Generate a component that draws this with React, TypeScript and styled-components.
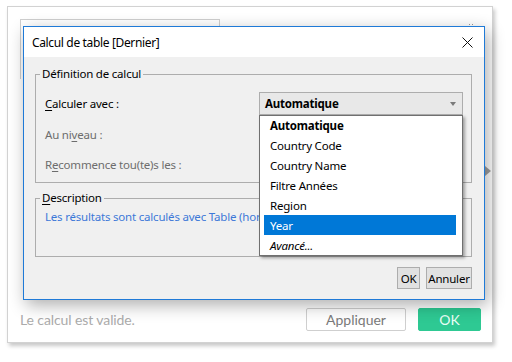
import React from "react";
import styled, { createGlobalStyle } from "styled-components";

const Global = createGlobalStyle`
  html, body { margin: 0; padding: 0; background: #ffffff; }
  body { width: 512px; height: 362px; overflow: hidden; }
  * { box-sizing: border-box; }
`;

const WIN = `"Noto Sans", "Open Sans", "DejaVu Sans", sans-serif`;

const Card = styled.div`
  position: relative;
  margin: 6px 0 0 7px;
  width: 486px;
  height: 337px;
  background: #fff;
  border: 1px solid #d2d2d2;
  box-shadow: 2px 3px 4px rgba(0, 0, 0, 0.22);
  display: flex;
  flex-direction: column;
`;

const BgArea = styled.div`
  flex: 1;
  display: flex;
  justify-content: space-between;
  padding: 12px 0 0 12px;
`;

const BgPanel = styled.div`
  width: 200px;
  height: 60px;
  border: 1px solid #cfcfcf;
  border-bottom: none;
`;

const RightRail = styled.div`
  width: 30px;
  display: flex;
  flex-direction: column;
  align-items: flex-end;
`;

const Grip = styled.div`
  margin: 4px 17px 0 0;
  width: 7px;
  height: 7px;
  background-image: radial-gradient(circle, #9a9a9a 0.8px, transparent 1px);
  background-size: 3px 3px;
`;

const SideArrow = styled.div`
  margin: 136px 1px 0 0;
  width: 0;
  height: 0;
  border-top: 5px solid transparent;
  border-bottom: 5px solid transparent;
  border-left: 6px solid #a0a0a0;
`;

const Footer = styled.div`
  display: flex;
  align-items: center;
  padding: 0 11px 11px 12px;
  gap: 12px;
  font-family: Lato, "Open Sans", sans-serif;
`;

const Status = styled.div`
  flex: 1;
  font-size: 14px;
  letter-spacing: -0.1px;
  color: #ababab;
`;

const WebButton = styled.button<{ $primary?: boolean }>`
  height: 23px;
  width: ${(p) => (p.$primary ? "63px" : "100px")};
  border-radius: 2px;
  border: 1px solid ${(p) => (p.$primary ? "#2ec993" : "#cfcfcf")};
  background: ${(p) => (p.$primary ? "#2ec993" : "#ffffff")};
  color: ${(p) => (p.$primary ? "#e9fff6" : "#7a7a7a")};
  font-family: Lato, "Open Sans", sans-serif;
  font-size: 14px;
  padding: 0;
`;

const Dialog = styled.div`
  position: absolute;
  left: 15px;
  top: 19px;
  width: 462px;
  height: 274px;
  border: 1px solid #1f7ad7;
  background: #f0f0f0;
  box-shadow: 3px 5px 16px rgba(0, 0, 0, 0.32);
  display: flex;
  flex-direction: column;
  font-family: ${WIN};
  font-size: 11.5px;
  letter-spacing: -0.2px;
  color: #000;
`;

const TitleBar = styled.div`
  height: 30px;
  background: #fff;
  display: flex;
  align-items: center;
  justify-content: space-between;
  padding: 0 11px 0 8px;
`;

const Title = styled.span`
  font-size: 12px;
  letter-spacing: -0.35px;
`;

const Close = () => (
  <svg width="11" height="11" viewBox="0 0 11 11">
    <path d="M0.5 0.5 L10.5 10.5 M10.5 0.5 L0.5 10.5" stroke="#111" strokeWidth="1" />
  </svg>
);

const Body = styled.div`
  flex: 1;
  position: relative;
  display: flex;
  flex-direction: column;
  padding: 9px 12px 0 11px;
`;

const Group = styled.fieldset<{ $h: number }>`
  margin: 0;
  padding: 0 7px 0 4px;
  min-width: 0;
  height: ${(p) => p.$h}px;
  border: 1px solid #adadad;
`;

const Legend = styled.legend`
  padding: 0 2px;
  line-height: 16px;
`;

const U = styled.span`
  text-decoration: underline;
  text-underline-offset: 2px;
`;

const Rows = styled.div`
  display: flex;
  flex-direction: column;
  gap: 7px;
  padding: 10px 0 0 5px;
`;

const Row = styled.div`
  display: grid;
  grid-template-columns: 214px 204px;
  align-items: center;
  height: 23px;
`;

const Label = styled.span<{ $disabled?: boolean }>`
  color: ${(p) => (p.$disabled ? "#6d6d6d" : "#000")};
  padding-top: ${(p) => (p.$disabled ? "1px" : "0")};
`;

const Combo = styled.div`
  height: 23px;
  border: 1px solid #adadad;
  background: #e8e8e8;
  display: flex;
  align-items: center;
  justify-content: space-between;
  padding: 0 6px 0 5px;
  font-weight: 700;
`;

const ComboArrow = styled.span`
  width: 0;
  height: 0;
  border-left: 3.5px solid transparent;
  border-right: 3.5px solid transparent;
  border-top: 4px solid #7a7a7a;
`;

const DescText = styled.div`
  padding: 3px 0 0 5px;
  color: #3c78d8;
  white-space: nowrap;
`;

const Spacer = styled.div<{ $h: number }>`
  height: ${(p) => p.$h}px;
  flex: none;
`;

const ButtonRow = styled.div`
  display: flex;
  justify-content: flex-end;
  gap: 6px;
  padding: 10px 0 0 0;
`;

const WinButton = styled.button<{ $w: number }>`
  height: 22px;
  width: ${(p) => p.$w}px;
  border: 1px solid #adadad;
  background: #e1e1e1;
  font-family: ${WIN};
  font-size: 11.5px;
  letter-spacing: -0.2px;
  color: #000;
  padding: 0;
`;

const List = styled.div`
  position: absolute;
  left: 235px;
  top: 58px;
  width: 204px;
  height: 141px;
  background: #fff;
  border: 1px solid #707070;
  box-shadow: 2px 2px 3px rgba(0, 0, 0, 0.35);
  display: flex;
  flex-direction: column;
`;

const Item = styled.div<{ $selected?: boolean; $bold?: boolean; $italic?: boolean }>`
  height: 20px;
  margin: 0 6px 0 4px;
  padding-left: 6px;
  display: flex;
  align-items: center;
  background: ${(p) => (p.$selected ? "#0078d7" : "transparent")};
  color: ${(p) => (p.$selected ? "#fff" : "#000")};
  font-weight: ${(p) => (p.$bold ? 700 : 400)};
  font-style: ${(p) => (p.$italic ? "italic" : "normal")};
`;

const items = [
  { t: "Automatique", bold: true },
  { t: "Country Code" },
  { t: "Country Name" },
  { t: "Filtre Années" },
  { t: "Region" },
  { t: "Year", selected: true },
  { t: "Avancé...", italic: true },
];

export default function App() {
  return (
    <>
      <Global />
      <Card>
        <BgArea>
          <BgPanel />
          <RightRail>
            <Grip />
            <SideArrow />
          </RightRail>
        </BgArea>
        <Footer>
          <Status>Le calcul est valide.</Status>
          <WebButton>Appliquer</WebButton>
          <WebButton $primary>OK</WebButton>
        </Footer>
        <Dialog>
          <TitleBar>
            <Title>Calcul de table [Dernier]</Title>
            <Close />
          </TitleBar>
          <Body>
            <Group $h={117}>
              <Legend>Définition de calcul</Legend>
              <Rows>
                <Row>
                  <Label>
                    <U>C</U>alculer avec :
                  </Label>
                  <Combo>
                    <span>Automatique</span>
                    <ComboArrow />
                  </Combo>
                </Row>
                <Row>
                  <Label $disabled>
                    Au ni<U>v</U>eau :
                  </Label>
                </Row>
                <Row>
                  <Label $disabled>
                    R<U>e</U>commence tou(te)s les :
                  </Label>
                </Row>
              </Rows>
            </Group>
            <Spacer $h={7} />
            <Group $h={67}>
              <Legend>
                <U>D</U>escription
              </Legend>
              <DescText>Les résultats sont calculés avec Table (horizontal).</DescText>
            </Group>
            <ButtonRow>
              <WinButton $w={23}>OK</WinButton>
              <WinButton $w={46}>Annuler</WinButton>
            </ButtonRow>
            <List>
              {items.map((it) => (
                <Item key={it.t} $selected={it.selected} $bold={it.bold} $italic={it.italic}>
                  {it.t}
                </Item>
              ))}
            </List>
          </Body>
        </Dialog>
      </Card>
    </>
  );
}
